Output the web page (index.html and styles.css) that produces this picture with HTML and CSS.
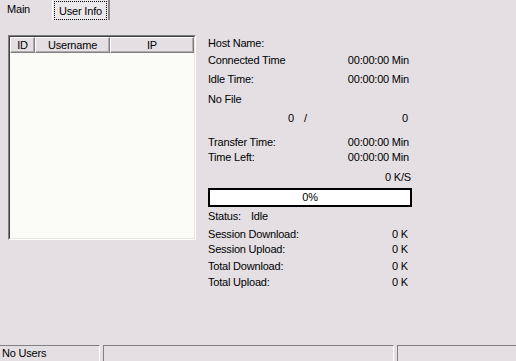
FILE: index.html
```html
<!DOCTYPE html>
<html>
<head>
<meta charset="utf-8">
<link rel="stylesheet" href="styles.css">
</head>
<body>
<div class="window">
  <div class="tabbar">
    <div class="tab">Main</div>
    <div class="tab tab-active"><span class="focus">User Info</span></div>
  </div>
  <div class="content">
    <div class="listview">
      <div class="lv-inner">
        <div class="lv-header">
          <div class="col col-id">ID</div>
          <div class="col col-user">Username</div>
          <div class="col col-ip">IP</div>
        </div>
      </div>
    </div>
    <div class="info">
      <div class="row r-host"><span>Host Name:</span></div>
      <div class="row r-conn"><span>Connected Time</span><span class="val">00:00:00 Min</span></div>
      <div class="row r-idle"><span>Idle Time:</span><span class="val">00:00:00 Min</span></div>
      <div class="row r-file"><span>No File</span></div>
      <div class="row r-count"><span class="cnt">0</span><span class="slash">/</span><span class="val val-k">0</span></div>
      <div class="row r-transfer"><span>Transfer Time:</span><span class="val">00:00:00 Min</span></div>
      <div class="row r-left"><span>Time Left:</span><span class="val">00:00:00 Min</span></div>
      <div class="row r-speed"><span class="val val-ks">0 K/S</span></div>
      <div class="progress">0%</div>
      <div class="row r-status"><span class="st-label">Status:</span><span>Idle</span></div>
      <div class="row r-sd"><span>Session Download:</span><span class="val val-k">0 K</span></div>
      <div class="row r-su"><span>Session Upload:</span><span class="val val-k">0 K</span></div>
      <div class="row r-td"><span>Total Download:</span><span class="val val-k">0 K</span></div>
      <div class="row r-tu"><span>Total Upload:</span><span class="val val-k">0 K</span></div>
    </div>
  </div>
  <div class="statusbar">
    <div class="pane pane-1">No Users</div>
    <div class="pane pane-2"></div>
    <div class="pane pane-3"></div>
  </div>
</div>
</body>
</html>
```

FILE: styles.css
```css
html, body {
  margin: 0;
  padding: 0;
}
body {
  background: #e3dfe3;
  font-family: "Liberation Sans", Arial, sans-serif;
  font-size: 11px;
  letter-spacing: -0.2px;
  color: #000;
}
.window {
  width: 516px;
  height: 361px;
  display: flex;
  flex-direction: column;
  overflow: hidden;
}
.tabbar {
  height: 20px;
  display: flex;
  flex: none;
}
.tab {
  width: 45px;
  padding: 3px 0 0 7px;
  line-height: 13px;
}
.tab-active {
  width: auto;
  padding: 1px 1px 0 1px;
  height: 19px;
  border-left: 1px solid #ffffff;
  border-right: 2px solid #8a868a;
  background: #ebe8eb;
}
.focus {
  display: block;
  width: 51px;
  height: 17px;
  border: 1px dotted #000;
  text-align: center;
  line-height: 18px;
}
.content {
  flex: 1;
  display: flex;
  padding: 15px 0 0 8px;
}
.listview {
  width: 186px;
  height: 203px;
  border: 1px solid;
  border-color: #808080 #ffffff #ffffff #808080;
}
.lv-inner {
  height: 100%;
  box-sizing: border-box;
  border: 1px solid;
  border-color: #404040 #e8e4d8 #e8e4d8 #404040;
  background: #fbfcf8;
}
.lv-header {
  display: flex;
  height: 16px;
}
.col {
  box-sizing: border-box;
  height: 16px;
  line-height: 14px;
  text-align: center;
  background: #e3dfe3;
  border: 1px solid;
  border-color: #ffffff #808080 #808080 #ffffff;
  box-shadow: inset -1px -1px 0 #b0acb0;
}
.col-id { width: 25px; }
.col-user { width: 75px; }
.col-ip { width: 84px; }
.info {
  width: 204px;
  margin-left: 12px;
  padding-top: 2px;
}
.row {
  display: flex;
  line-height: 13px;
  height: 13px;
  white-space: nowrap;
}
.val {
  margin-left: auto;
  padding-right: 3px;
}
.val-k { padding-right: 4px; }
.val-ks { padding-right: 1px; }
.cnt {
  width: 86px;
  text-align: right;
}
.slash { margin-left: 10px; }
.st-label { width: 43px; }
.r-conn { margin-top: 4px; }
.r-idle { margin-top: 6px; }
.r-file { margin-top: 7px; }
.r-count { margin-top: 6px; }
.r-transfer { margin-top: 11px; }
.r-left { margin-top: 2px; }
.r-speed { margin-top: 7px; }
.progress {
  margin-top: 4px;
  height: 15px;
  border: 2px solid #000;
  background: #fff;
  text-align: center;
  line-height: 15px;
}
.r-status { margin-top: 3px; }
.r-sd { margin-top: 5px; }
.r-su { margin-top: 2px; }
.r-td { margin-top: 4px; }
.r-tu { margin-top: 3px; }
.statusbar {
  height: 16px;
  flex: none;
  display: flex;
  gap: 3px;
}
.pane {
  box-sizing: border-box;
  height: 17px;
  border-top: 1px solid #808080;
  border-left: 1px solid #808080;
  border-right: 1px solid #ffffff;
  padding-left: 1px;
  line-height: 15px;
  white-space: nowrap;
}
.pane-1 { width: 100px; border-left: none; padding-left: 2px; }
.pane-2 { width: 291px; }
.pane-3 { flex: 1; border-right: none; }
```
